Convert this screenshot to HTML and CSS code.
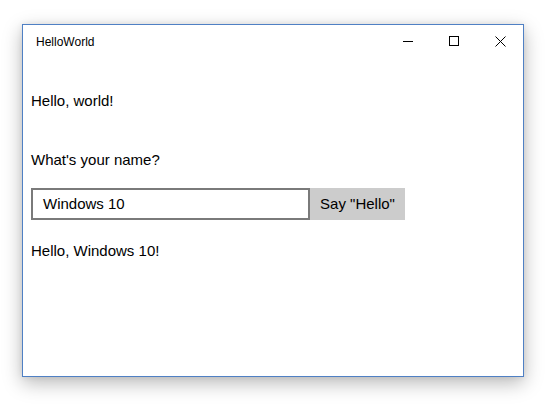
FILE: index.html
```html
<!DOCTYPE html>
<html>
<head>
<meta charset="utf-8">
<link rel="stylesheet" href="styles.css">
</head>
<body>
<div class="window">
  <div class="titlebar">
    <span class="title">HelloWorld</span>
    <div class="caption">
      <div class="cbtn"><svg width="10" height="10" viewBox="0 0 10 10"><path d="M0 5.5H10" stroke="#000" stroke-width="1"/></svg></div>
      <div class="cbtn"><svg width="10" height="10" viewBox="0 0 10 10"><rect x="0.5" y="0.5" width="9" height="9" fill="none" stroke="#000" stroke-width="1"/></svg></div>
      <div class="cbtn"><svg width="11" height="11" viewBox="0 0 11 11"><path d="M0.5 0.5L10.5 10.5M10.5 0.5L0.5 10.5" stroke="#000" stroke-width="1"/></svg></div>
    </div>
  </div>
  <div class="content">
    <div class="line first">Hello, world!</div>
    <div class="line question">What's your name?</div>
    <div class="inputrow">
      <div class="textbox">Windows 10</div>
      <div class="button">Say "Hello"</div>
    </div>
    <div class="line result">Hello, Windows 10!</div>
  </div>
</div>
</body>
</html>
```
FILE: styles.css
```css
html, body {
  margin: 0;
  padding: 0;
  background: #ffffff;
}
body {
  width: 552px;
  height: 406px;
  padding: 24px 0 0 22px;
  box-sizing: border-box;
  font-family: "Liberation Sans", Arial, sans-serif;
  color: #000;
}
.window {
  width: 502px;
  height: 353px;
  box-sizing: border-box;
  border: 1px solid #4f80c4;
  background: #fff;
  box-shadow: 0 6px 18px rgba(0, 0, 0, 0.28), 0 0 6px rgba(0, 0, 0, 0.08);
  display: flex;
  flex-direction: column;
}
.titlebar {
  height: 32px;
  display: flex;
  align-items: stretch;
}
.title {
  font-size: 12px;
  padding-left: 13px;
  padding-top: 2px;
  display: flex;
  align-items: center;
  flex: 1;
}
.caption {
  display: flex;
}
.cbtn {
  width: 46px;
  height: 32px;
  display: flex;
  align-items: center;
  justify-content: center;
}
.cbtn svg {
  display: block;
}
.content {
  padding: 34px 8px 0 8px;
  display: flex;
  flex-direction: column;
  align-items: flex-start;
}
.line {
  font-size: 15px;
  line-height: 20px;
}
.question {
  margin-top: 39px;
}
.inputrow {
  margin-top: 18px;
  display: flex;
}
.textbox {
  width: 279px;
  height: 32px;
  box-sizing: border-box;
  border: 2px solid #7a7a7a;
  padding: 0 10px;
  font-size: 15px;
  line-height: 28px;
}
.button {
  width: 95px;
  height: 32px;
  background: #cccccc;
  font-size: 15px;
  line-height: 32px;
  text-align: center;
}
.result {
  margin-top: 21px;
}
```
